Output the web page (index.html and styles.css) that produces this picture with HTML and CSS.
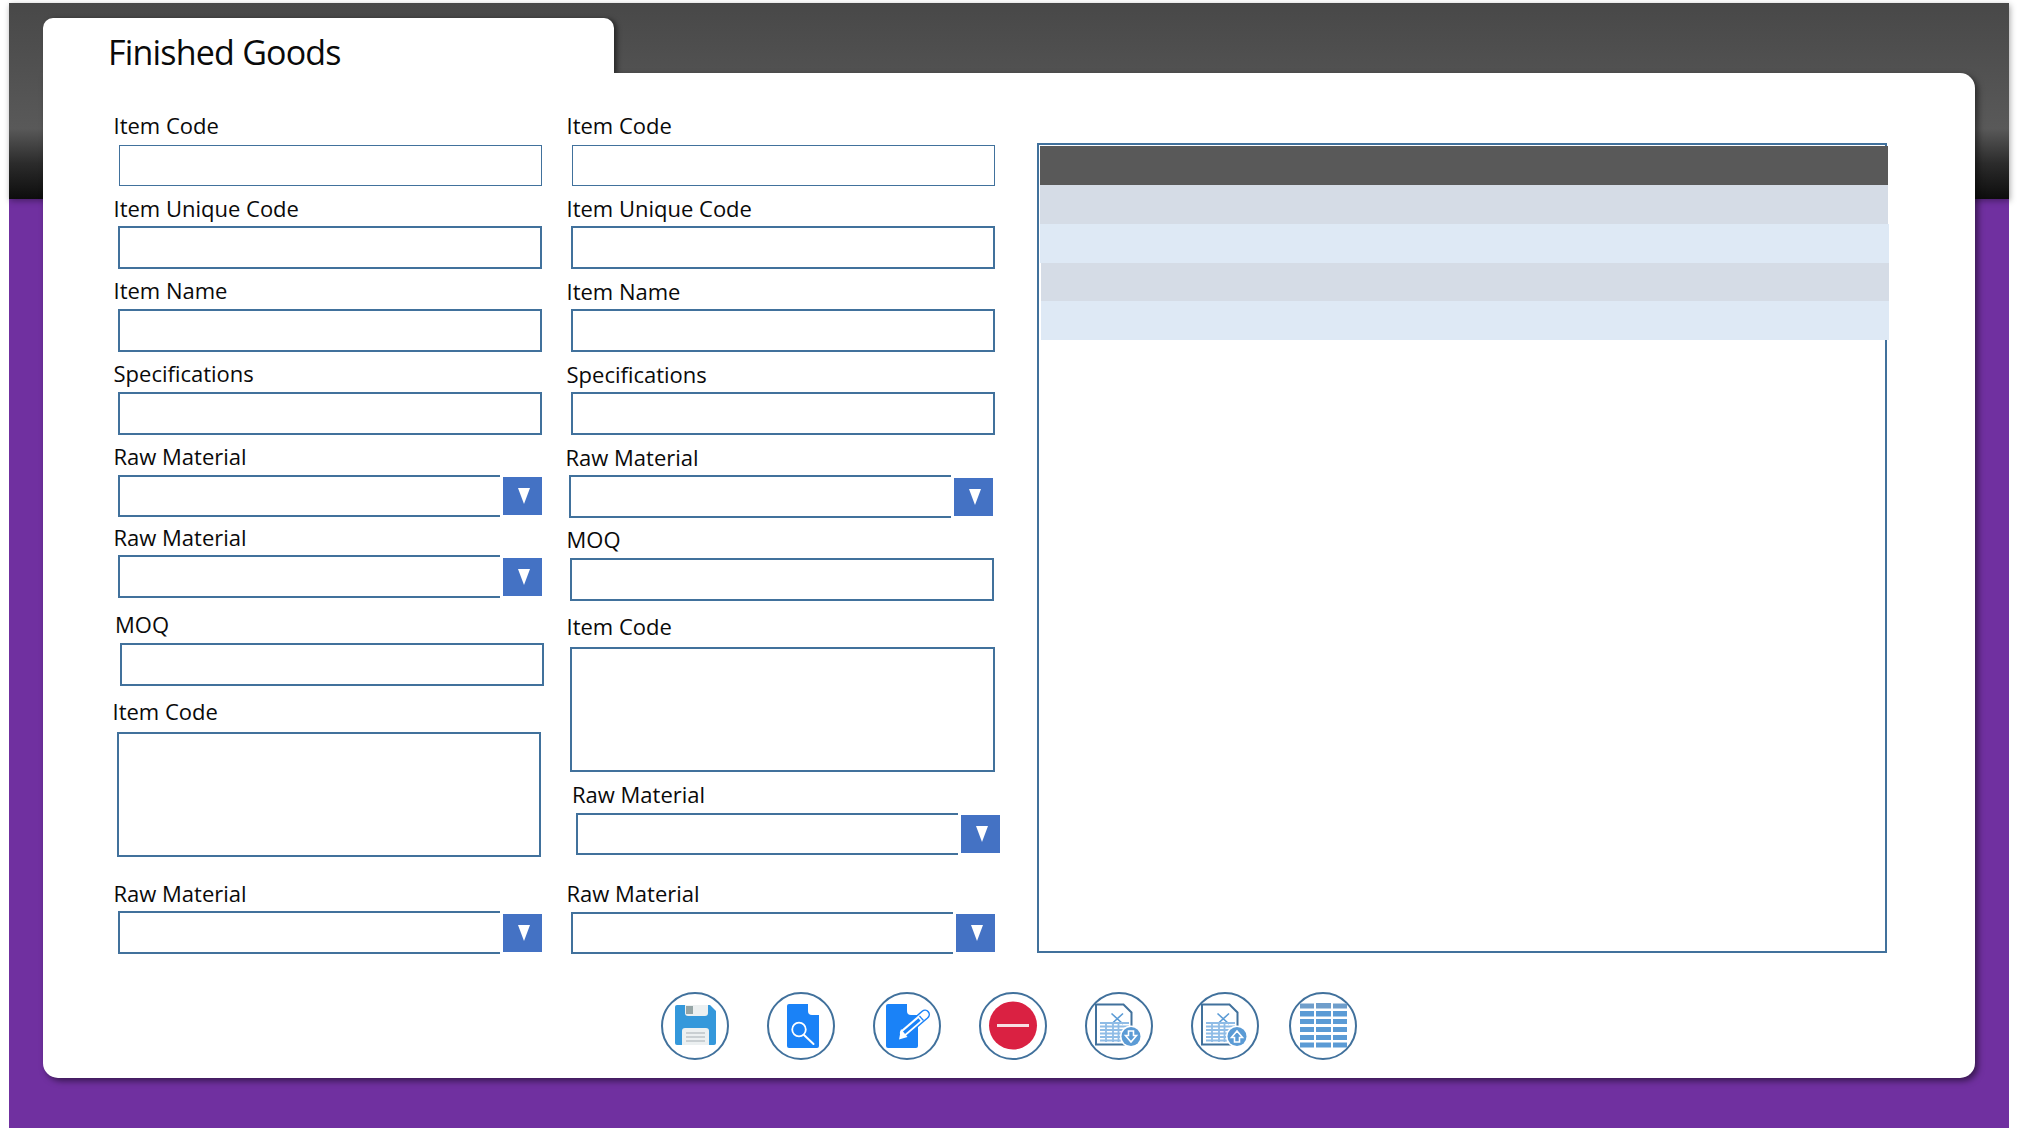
FILE: index.html
```html
<!DOCTYPE html>
<html lang="en">
<head>
<meta charset="utf-8">
<title>Finished Goods</title>
<link rel="stylesheet" href="styles.css">
</head>
<body>
<main class="stage">
  <h1 class="tab">Finished Goods</h1>
  <section class="card">
    <div class="form-row">
      <form class="col col-left">
        <div class="field"><label class="label">Item Code</label><input class="input thin in-7 gap-3"></div>
        <div class="field mt-11"><label class="label">Item Unique Code</label><input class="input in-6 gap-1"></div>
        <div class="field mt-10"><label class="label">Item Name</label><input class="input in-6 gap-2"></div>
        <div class="field mt-10"><label class="label">Specifications</label><input class="input in-6 gap-2"></div>
        <div class="field mt-10"><label class="label">Raw Material</label>
          <div class="select in-6 gap-2"><input class="select-box h-42"><button type="button" class="arrow"></button></div></div>
        <div class="field mt-9"><label class="label">Raw Material</label>
          <div class="select in-6 gap-1"><input class="select-box"><button type="button" class="arrow"></button></div></div>
        <div class="field mt-15"><label class="label lab-2">MOQ</label><input class="input in-8 gap-2"></div>
        <div class="field mt-14"><label class="label lab-n1">Item Code</label><textarea class="input area in-5 gap-4"></textarea></div>
        <div class="field mt-25"><label class="label">Raw Material</label>
          <div class="select in-6 gap-1"><input class="select-box"><button type="button" class="arrow"></button></div></div>
      </form>
      <form class="col col-right">
        <div class="field"><label class="label">Item Code</label><input class="input thin in-7 gap-3"></div>
        <div class="field mt-11"><label class="label">Item Unique Code</label><input class="input in-6 gap-1"></div>
        <div class="field mt-11"><label class="label">Item Name</label><input class="input in-6 gap-1"></div>
        <div class="field mt-11"><label class="label">Specifications</label><input class="input in-6 gap-1"></div>
        <div class="field mt-11"><label class="label lab-n1">Raw Material</label>
          <div class="select in-4 gap-1"><input class="select-box"><button type="button" class="arrow"></button></div></div>
        <div class="field mt-10"><label class="label">MOQ</label><input class="input in-5 gap-2"></div>
        <div class="field mt-14"><label class="label">Item Code</label><textarea class="input area wide in-5 gap-4"></textarea></div>
        <div class="field mt-11"><label class="label lab-6">Raw Material</label>
          <div class="select in-11 gap-2"><input class="select-box h-42"><button type="button" class="arrow"></button></div></div>
        <div class="field mt-27"><label class="label">Raw Material</label>
          <div class="select in-6 gap-2"><input class="select-box h-42"><button type="button" class="arrow"></button></div></div>
      </form>
      <div class="panel">
        <div class="grid-row grid-head"></div>
        <div class="grid-row grid-dark"></div>
        <div class="grid-row grid-light over"></div>
        <div class="grid-row grid-dark over nudge short"></div>
        <div class="grid-row grid-light over nudge"></div>
      </div>
    </div>
    <div class="toolbar">
      <button type="button" class="tool" aria-label="Save">
        <svg viewBox="0 0 68 68" width="68" height="68">
          <path d="M16 13H49L55 19V51a2 2 0 0 1-2 2H16a2 2 0 0 1-2-2V15a2 2 0 0 1 2-2Z" fill="#3498db"/>
          <path d="M24 13H47V21a3 3 0 0 1-3 3H27a3 3 0 0 1-3-3Z" fill="#ecf0f1"/>
          <rect x="25" y="14" width="7" height="8" fill="#95a5a6"/>
          <path d="M21 53V39a3 3 0 0 1 3-3H45a3 3 0 0 1 3 3V53Z" fill="#ecf0f1"/>
          <path d="M25 41H44M25 45H44M25 49H44" stroke="#bdc3c7" stroke-width="1.4"/>
        </svg>
      </button>
      <button type="button" class="tool" aria-label="Search">
        <svg viewBox="0 0 68 68" width="68" height="68">
          <path d="M22 12H41L52 23V54a2 2 0 0 1-2 2H22a2 2 0 0 1-2-2V14a2 2 0 0 1 2-2Z" fill="#1a82f7"/>
          <path d="M41 12H43L52 21V23H45a4 4 0 0 1-4-4Z" fill="#fff"/>
          <circle cx="32" cy="37.500" r="6.800" fill="none" stroke="#fff" stroke-width="1.800"/>
          <path d="M37 43L46.500 52" stroke="#fff" stroke-width="2" stroke-linecap="round"/>
        </svg>
      </button>
      <button type="button" class="tool" aria-label="Edit">
        <svg viewBox="0 0 68 68" width="68" height="68">
          <path d="M15 12H34L45 23V54a2 2 0 0 1-2 2H15a2 2 0 0 1-2-2V14a2 2 0 0 1 2-2Z" fill="#1a82f7"/>
          <path d="M34 12H36L45 21V23H38a4 4 0 0 1-4-4Z" fill="#fff"/>
          <path d="M30.500 41L52 22.500" stroke="#1a82f7" stroke-width="10" stroke-linecap="round"/>
          <path d="M30.500 41L52 22.500" stroke="#fff" stroke-width="7" stroke-linecap="round"/>
          <path d="M29.500 42L46.500 27.500" stroke="#1a82f7" stroke-width="3.200"/>
          <path d="M28 37L26 47.500L34.500 45Z" fill="#fff"/>
          <path d="M46.500 24L50.500 28.500" stroke="#1a82f7" stroke-width="1.200"/>
        </svg>
      </button>
      <button type="button" class="tool" aria-label="Delete">
        <svg viewBox="0 0 68 68" width="68" height="68">
          <circle cx="34" cy="33.500" r="24" fill="#da2142"/>
          <rect x="18" y="32" width="32" height="3" fill="#f7dfe3"/>
        </svg>
      </button>
      <button type="button" class="tool" aria-label="Export">
        <svg viewBox="0 0 68 68" width="68" height="68">
          <path d="M11 12.500H38.500L46.500 20.500V52.500H11Z" fill="#fff" stroke="#41719c" stroke-width="2"/>
          <path d="M26.500 21.500L38 32M38 21.500L26.500 32" stroke="#5b9bd5" stroke-width="1.600"/>
          <path d="M15 31H44M15 34.500H44M15 38H42M15 41.500H38M15 45H37M15 48.500H36M21 30V50M28 30V50M33.500 30V50" stroke="#8fbce6" stroke-width="1.800" fill="none"/>
          <circle cx="46" cy="44.500" r="11" fill="#fff"/>
          <circle cx="46" cy="44.500" r="9.500" fill="#5b9bd5"/>
          <path d="M43.500 39H48.500V43.500H51.500L46 50L40.500 43.500H43.500Z" fill="#5b9bd5" stroke="#fff" stroke-width="1.600"/>
        </svg>
      </button>
      <button type="button" class="tool" aria-label="Import">
        <svg viewBox="0 0 68 68" width="68" height="68">
          <path d="M11 12.500H38.500L46.500 20.500V52.500H11Z" fill="#fff" stroke="#41719c" stroke-width="2"/>
          <path d="M26.500 21.500L38 32M38 21.500L26.500 32" stroke="#5b9bd5" stroke-width="1.600"/>
          <path d="M15 31H44M15 34.500H44M15 38H42M15 41.500H38M15 45H37M15 48.500H36M21 30V50M28 30V50M33.500 30V50" stroke="#8fbce6" stroke-width="1.800" fill="none"/>
          <circle cx="46" cy="44.500" r="11" fill="#fff"/>
          <circle cx="46" cy="44.500" r="9.500" fill="#5b9bd5"/>
          <path d="M43.500 50H48.500V45.500H51.500L46 39L40.500 45.500H43.500Z" fill="#5b9bd5" stroke="#fff" stroke-width="1.600"/>
        </svg>
      </button>
      <button type="button" class="tool tool-last" aria-label="Table">
        <svg viewBox="0 0 68 68" width="68" height="68" fill="#5b9bd5">
          <path d="M11 11.500H25V16.500H11ZM27 11H42V16.500H27ZM44 11.500H58V16.500H44Z" fill="#6f9ecb"/>
          <path d="M11 19H25V24.500H11ZM27 19H42V24.500H27ZM44 19H58V24.500H44Z"/>
          <path d="M11 27H25V32H11ZM27 27H42V32H27ZM44 27H58V32H44Z"/>
          <path d="M11 35H25V40H11ZM27 35H42V40H27ZM44 35H58V40H44Z"/>
          <path d="M11 43H25V48H11ZM27 43H42V48H27ZM44 43H58V48H44Z"/>
          <path d="M11 50.500H25V55.500H11ZM27 50.500H42V55.500H27ZM44 50.500H58V55.500H44Z"/>
        </svg>
      </button>
    </div>
  </section>
</main>
</body>
</html>
```
FILE: styles.css
```css
* { box-sizing: border-box; }
html, body { margin: 0; padding: 0; background: #fff; }
body { font-family: "Open Sans", "Noto Sans", sans-serif; color: #0a0a0a; overflow: hidden; }

.stage {
  position: relative;
  width: 2000px;
  height: 1125px;
  margin: 3px 0 0 9px;
  padding: 15px 0 0 34px;
  background: #7030a0;
}
.stage::before {
  content: "";
  position: absolute;
  inset: 0 0 auto 0;
  height: 196px;
  background: linear-gradient(#484848 0, #595959 64%, #2b2b2b 82%, #0d0d0d 100%);
  box-shadow: 1px 2px 6px rgba(0, 0, 0, .35);
}
.tab {
  position: relative;
  z-index: 1;
  width: 571px;
  height: 55px;
  margin: 0;
  padding-left: 65px;
  background: #fff;
  border-radius: 10px 10px 0 0;
  box-shadow: 3px 1px 5px rgba(0, 0, 0, .5);
  clip-path: inset(-10px -10px 0 -10px);
  font-size: 34px;
  font-weight: 400;
  line-height: 68px;
  letter-spacing: -.8px;
  white-space: nowrap;
}
.card {
  position: relative;
  width: 1932px;
  height: 1005px;
  padding: 41px 0 0 67px;
  background: #fff;
  border-radius: 0 15px 15px 15px;
  box-shadow: 3px 3px 6px rgba(0, 0, 0, .5);
}
.form-row { display: flex; height: 840px; }
.col { display: flex; flex-direction: column; flex: none; }
.col-left { margin-left: 2px; width: 453px; }
.col-right { width: 472px; }

.field { display: flex; flex-direction: column; }
.label {
  display: block;
  height: 28px;
  padding-left: 1.500px;
  font-size: 22px;
  line-height: 22px;
  white-space: nowrap;
}
.lab-2 { padding-left: 3px; }
.lab-n1 { padding-left: .5px; }
.lab-6 { padding-left: 7px; }

.input, .select-box {
  display: block;
  margin: 0;
  padding: 0;
  background: #fff;
  border: 2px solid #41719c;
  border-radius: 0;
  outline: none;
  font: inherit;
}
.input { width: 424px; height: 43px; resize: none; }
.thin { width: 423px; height: 41px; border-width: 1px; }
.area { height: 125px; }
.wide { width: 425px; }

.select { display: flex; align-items: center; width: 424px; }
.select-box { width: 382px; height: 43px; border-right: 0; flex: none; }
.h-42 { height: 42px; }
.arrow {
  display: flex;
  align-items: center;
  justify-content: center;
  width: 39px;
  height: 38px;
  margin: 0 0 0 3px;
  padding: 0;
  background: #4472c4;
  border: 0;
  flex: none;
}
.arrow::after {
  content: "";
  width: 0;
  height: 0;
  border-left: 6.500px solid transparent;
  border-right: 6.500px solid transparent;
  border-top: 16px solid #fff;
  transform: translateX(1px);
}

.in-4 { margin-left: 4px; }
.in-5 { margin-left: 5px; }
.in-6 { margin-left: 6px; }
.in-7 { margin-left: 7px; }
.in-8 { margin-left: 8px; }
.in-11 { margin-left: 11px; }
.gap-1 { margin-top: 1px; }
.gap-2 { margin-top: 2px; }
.gap-3 { margin-top: 3px; }
.gap-4 { margin-top: 4px; }
.mt-9 { margin-top: 9px; }
.mt-10 { margin-top: 10px; }
.mt-11 { margin-top: 11px; }
.mt-14 { margin-top: 14px; }
.mt-15 { margin-top: 15px; }
.mt-25 { margin-top: 25px; }
.mt-27 { margin-top: 27px; }

.panel {
  width: 850px;
  height: 810px;
  margin-top: 29px;
  padding: 1px 0 0 1px;
  border: 2px solid #41719c;
  flex: none;
}
.grid-row { height: 39px; margin-right: -3px; }
.grid-head { background: #595959; }
.grid-dark { background: #d5dce6; }
.grid-light { background: #dee9f5; }
.over { margin-right: -4px; }
.nudge { margin-left: 1px; }
.short { height: 38px; }

.toolbar { display: flex; gap: 38px; margin: 38px 0 0 551px; }
.tool {
  display: block;
  width: 68px;
  height: 68px;
  padding: 0;
  background: #fff;
  border: 2px solid #41719c;
  border-radius: 50%;
  flex: none;
}
.tool svg { display: block; margin: -2px; overflow: visible; }
.tool-last { margin-left: -8px; }
```
